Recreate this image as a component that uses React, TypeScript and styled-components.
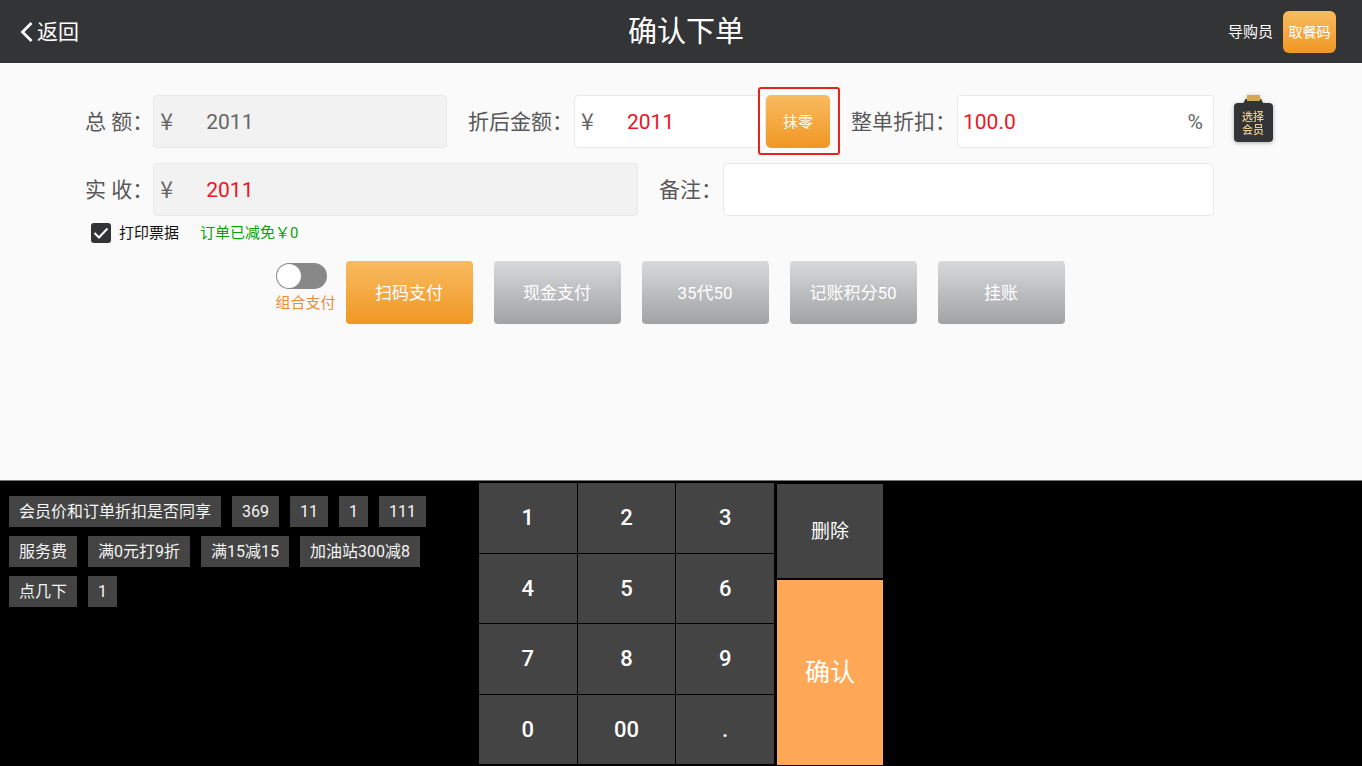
import React, { useState } from "react";
import styled, { createGlobalStyle } from "styled-components";

const GlobalStyle = createGlobalStyle`
  *, *::before, *::after { box-sizing: border-box; }
  body {
    margin: 0;
    background: #fafafa;
    font-family: Roboto, "Noto Sans CJK SC", sans-serif;
  }
  button, input { font-family: inherit; margin: 0; }
  button { border: 0; padding: 0; cursor: pointer; }
`;

const orange = "linear-gradient(#f8bb60, #f19724)";
const grey = "linear-gradient(#d8d9da, #a1a2a4)";

const Page = styled.div`
  display: flex;
  flex-direction: column;
  min-height: 100vh;
`;

const Header = styled.header`
  display: flex;
  align-items: center;
  height: 63px;
  padding: 0 26px 0 20px;
  background: #333436;
  color: #fff;
`;

const BackButton = styled.button`
  display: flex;
  align-items: center;
  gap: 3px;
  flex: 0 0 124px;
  background: none;
  color: #fff;
  font-size: 21px;
  line-height: 30px;
`;

const Title = styled.h1`
  flex: 1;
  margin: 0;
  font-size: 29px;
  font-weight: 400;
  line-height: 42px;
  text-align: center;
`;

const Guide = styled.span`
  margin-right: 10px;
  font-size: 15px;
  line-height: 22px;
`;

const CodeButton = styled.button`
  width: 53px;
  height: 42px;
  border-radius: 6px;
  background: ${orange};
  color: #fff;
  font-size: 14px;
  line-height: 20px;
`;

const Main = styled.main`
  flex: 1;
  padding: 32px 89px 0 85px;
`;

const Form = styled.form`
  display: flex;
  gap: 19px;
`;

const Rows = styled.div`
  display: flex;
  flex: 1;
  flex-direction: column;
  gap: 15px;
  min-width: 0;
`;

const Row = styled.div`
  display: flex;
  gap: 21px;
`;

const Group = styled.div<{ $grow: number }>`
  display: flex;
  align-items: center;
  flex: ${(p) => p.$grow} 1 0;
  min-width: 0;
`;

const FieldLabel = styled.label<{ $width: number }>`
  flex: 0 0 ${(p) => p.$width}px;
  color: #585858;
  font-size: 21px;
  line-height: 30px;
  white-space: nowrap;
`;

const Field = styled.div<{ $muted?: boolean }>`
  display: flex;
  align-items: center;
  flex: 1;
  min-width: 0;
  height: 53px;
  padding: 0 10px 0 5px;
  border: 1px solid #e8e8e8;
  border-radius: 4px;
  background: ${(p) => (p.$muted ? "#f2f2f2" : "#fff")};
  color: #666;
  font-size: 21px;
`;

const Currency = styled.span`
  flex: 0 0 47px;
  padding: 0 0 3px 1px;
  font-family: "Noto Sans CJK SC", sans-serif;
  font-size: 23px;
  line-height: 30px;
`;

const Value = styled.input<{ $red?: boolean }>`
  flex: 1;
  min-width: 0;
  width: 100%;
  padding: 0;
  border: 0;
  outline: 0;
  background: transparent;
  color: ${(p) => (p.$red ? "#ec1526" : "#666")};
  font-size: 21px;
`;

const RoundOff = styled.div`
  position: relative;
  flex: 0 0 64px;

  &::after {
    content: "";
    position: absolute;
    inset: -8px -10px -7px -8px;
    border: 2px solid #e3261b;
    border-radius: 3px;
    pointer-events: none;
  }
`;

const RoundOffButton = styled.button`
  width: 100%;
  height: 53px;
  border-radius: 5px;
  background: ${orange};
  color: #fff;
  font-size: 15px;
  line-height: 20px;
`;

const MemberButton = styled.button`
  flex: 0 0 40px;
  height: 50px;
  background: none;
  filter: drop-shadow(0 1px 2px rgba(0, 0, 0, 0.3));

  svg { display: block; }
`;

const Options = styled.div`
  display: flex;
  align-items: center;
  gap: 21px;
  height: 33px;
  padding-left: 6px;
  font-size: 15px;
  line-height: 20px;
`;

const CheckLabel = styled.label`
  display: flex;
  align-items: center;
  gap: 8px;
  color: #111;
`;

const Checkbox = styled.input`
  appearance: none;
  width: 20px;
  height: 20px;
  border: 2px solid #333436;
  border-radius: 3px;

  &:checked {
    background: #333436
      url("data:image/svg+xml,%3Csvg xmlns='http://www.w3.org/2000/svg' viewBox='0 0 16 16'%3E%3Cpath d='M1.500 8l4.500 4.500 8.500-9' fill='none' stroke='white' stroke-width='2'/%3E%3C/svg%3E")
      center / 16px no-repeat;
  }
`;

const Saving = styled.span`
  color: #0aa00a;
`;

const Payments = styled.div`
  display: flex;
  justify-content: center;
  gap: 21px;
  margin-top: 12px;
  padding-right: 18px;
`;

const Combined = styled.label`
  display: flex;
  flex-direction: column;
  gap: 3px;
  width: 60px;
  margin: 2px -11px 0 0;
  color: #f08a35;
  font-size: 15px;
  line-height: 22px;
`;

const Switch = styled.input`
  appearance: none;
  display: flex;
  align-items: center;
  width: 51px;
  height: 26px;
  padding: 1px;
  border-radius: 13px;
  background: #888;

  &::before {
    content: "";
    width: 24px;
    height: 24px;
    border-radius: 50%;
    background: #fff;
  }
  &:checked { justify-content: flex-end; background: #f19724; }
`;

const PayButton = styled.button<{ $active: boolean }>`
  width: 127px;
  height: 63px;
  border-radius: 4px;
  background: ${(p) => (p.$active ? orange : grey)};
  color: #fff;
  font-size: 17px;
  line-height: 24px;
`;

const Bottom = styled.section`
  display: grid;
  grid-template-columns: 479fr 404fr 479fr;
  height: 286px;
  border-top: 1px solid #777;
  background: #000;
`;

const Chips = styled.div`
  display: flex;
  flex-direction: column;
  gap: 9px;
  padding: 15px 0 0 9px;
`;

const ChipRow = styled.div`
  display: flex;
  gap: 11px;
`;

const Chip = styled.button`
  height: 31px;
  padding: 0 10px;
  background: #444;
  color: #f4f4f4;
  font-size: 16px;
  line-height: 22px;
  white-space: nowrap;
`;

const Keypad = styled.div`
  display: grid;
  grid-template-columns: 295fr 106fr;
  gap: 3px;
  padding: 2px 0 1px;
`;

const Digits = styled.div`
  display: grid;
  grid-template: repeat(4, 1fr) / repeat(3, 1fr);
  gap: 1px;
  padding-bottom: 1px;
`;

const Actions = styled.div`
  display: grid;
  grid-template-rows: 94fr 185fr;
  gap: 2px;
  padding-top: 1px;
`;

const Key = styled.button`
  background: #444;
  color: #fff;
  font-size: 22px;
  font-weight: 500;
  line-height: 27px;
`;

const DeleteKey = styled(Key)`
  font-size: 19px;
  font-weight: 400;
`;

const ConfirmKey = styled(Key)`
  background: #ffa857;
  font-size: 25px;
  font-weight: 400;
`;

const payments = ["扫码支付", "现金支付", "35代50", "记账积分50", "挂账"];
const chips = [
  ["会员价和订单折扣是否同享", "369", "11", "1", "111"],
  ["服务费", "满0元打9折", "满15减15", "加油站300减8"],
  ["点几下", "1"],
];
const digits = ["1", "2", "3", "4", "5", "6", "7", "8", "9", "0", "00", "."];

export default function App() {
  const [active, setActive] = useState(payments[0]);

  return (
    <Page>
      <GlobalStyle />
      <Header>
        <BackButton type="button">
          <svg width="14" height="22" viewBox="0 0 14 22" fill="none" stroke="#fff" strokeWidth="2.8" aria-hidden="true">
            <path d="M11.5 2L2.5 11l9 9" />
          </svg>
          返回
        </BackButton>
        <Title>确认下单</Title>
        <Guide>导购员</Guide>
        <CodeButton type="button">取餐码</CodeButton>
      </Header>

      <Main>
        <Form onSubmit={(e) => e.preventDefault()}>
          <Rows>
            <Row>
              <Group $grow={362}>
                <FieldLabel $width={68} htmlFor="total">总 额：</FieldLabel>
                <Field $muted>
                  <Currency>¥</Currency>
                  <Value id="total" defaultValue="2011" readOnly />
                </Field>
              </Group>
              <Group $grow={362}>
                <FieldLabel $width={106} htmlFor="discounted">折后金额：</FieldLabel>
                <Field>
                  <Currency>¥</Currency>
                  <Value id="discounted" $red defaultValue="2011" />
                </Field>
                <RoundOff>
                  <RoundOffButton type="button">抹零</RoundOffButton>
                </RoundOff>
              </Group>
              <Group $grow={363}>
                <FieldLabel $width={106} htmlFor="rate">整单折扣：</FieldLabel>
                <Field>
                  <Value id="rate" $red defaultValue="100.0" />
                  <span>%</span>
                </Field>
              </Group>
            </Row>
            <Row>
              <Group $grow={553}>
                <FieldLabel $width={68} htmlFor="received">实 收：</FieldLabel>
                <Field $muted>
                  <Currency>¥</Currency>
                  <Value id="received" $red defaultValue="2011" readOnly />
                </Field>
              </Group>
              <Group $grow={555}>
                <FieldLabel $width={64} htmlFor="note">备注：</FieldLabel>
                <Field>
                  <Value id="note" />
                </Field>
              </Group>
            </Row>
          </Rows>
          <MemberButton type="button" aria-label="选择会员">
            <svg width="40" height="50" viewBox="0 0 40 50">
              <path d="M10 9L12.500 4H28L30.500 9Z" fill="#333436" />
              <rect x="14" y="0" width="13" height="6" fill="#d5a758" />
              <rect x="1" y="8" width="39" height="39" rx="4" fill="#333436" />
              <g fill="#edc98c" fontSize="11" fontWeight="500" textAnchor="middle">
                <text x="20" y="26">选择</text>
                <text x="20" y="39">会员</text>
              </g>
            </svg>
          </MemberButton>
        </Form>

        <Options>
          <CheckLabel>
            <Checkbox type="checkbox" defaultChecked />
            打印票据
          </CheckLabel>
          <Saving>订单已减免￥0</Saving>
        </Options>

        <Payments>
          <Combined>
            <Switch type="checkbox" role="switch" />
            组合支付
          </Combined>
          {payments.map((name) => (
            <PayButton key={name} type="button" $active={name === active} onClick={() => setActive(name)}>
              {name}
            </PayButton>
          ))}
        </Payments>
      </Main>

      <Bottom>
        <Chips>
          {chips.map((row) => (
            <ChipRow key={row[0]}>
              {row.map((name) => (
                <Chip key={name} type="button">{name}</Chip>
              ))}
            </ChipRow>
          ))}
        </Chips>
        <Keypad>
          <Digits>
            {digits.map((digit) => (
              <Key key={digit} type="button">{digit}</Key>
            ))}
          </Digits>
          <Actions>
            <DeleteKey type="button">删除</DeleteKey>
            <ConfirmKey type="button">确认</ConfirmKey>
          </Actions>
        </Keypad>
      </Bottom>
    </Page>
  );
}
